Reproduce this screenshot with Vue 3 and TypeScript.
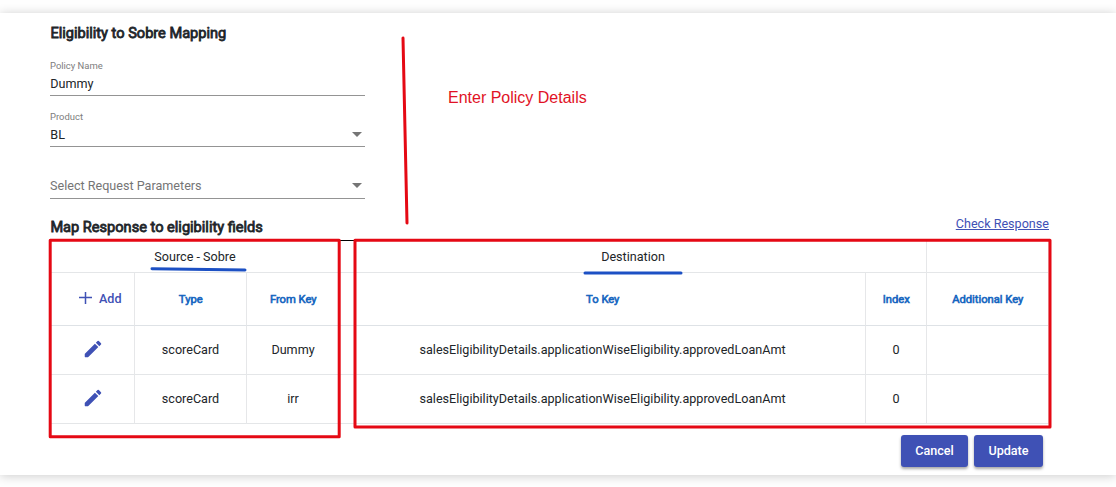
<script setup lang="ts">
interface MappingRow {
  type: string
  fromKey: string
  toKey: string
  index: number
  additionalKey: string
}

const rows: MappingRow[] = [
  { type: 'scoreCard', fromKey: 'Dummy', toKey: 'salesEligibilityDetails.applicationWiseEligibility.approvedLoanAmt', index: 0, additionalKey: '' },
  { type: 'scoreCard', fromKey: 'irr', toKey: 'salesEligibilityDetails.applicationWiseEligibility.approvedLoanAmt', index: 0, additionalKey: '' },
]
</script>

<template>
  <main class="page">
    <section class="card">
      <h2 class="title">Eligibility to Sobre Mapping</h2>
      <div class="form">
        <div class="field name">
          <label>Policy Name</label>
          <div class="value">Dummy</div>
        </div>
        <div class="field product">
          <label>Product</label>
          <div class="value">BL<i class="arrow"></i></div>
        </div>
        <div class="field params">
          <div class="value placeholder">Select Request Parameters<i class="arrow"></i></div>
        </div>
      </div>
      <div class="subhead">
        <h2 class="title">Map Response to eligibility fields</h2>
        <a class="link">Check Response</a>
      </div>
      <table class="grid">
        <colgroup>
          <col class="c-edit" /><col class="c-type" /><col class="c-from" /><col class="c-to" /><col class="c-index" /><col class="c-extra" />
        </colgroup>
        <thead>
          <tr class="groups">
            <td colspan="3">Source - Sobre</td>
            <td colspan="2">Destination</td>
            <td></td>
          </tr>
          <tr class="heads">
            <th class="add-cell">
              <button class="add" type="button">
                <svg width="14" height="14" viewBox="0 0 14 14"><path d="M7.5 1v12M1 6.5h13" /></svg>Add
              </button>
            </th>
            <th>Type</th>
            <th>From Key</th>
            <th>To Key</th>
            <th>Index</th>
            <th>Additional Key</th>
          </tr>
        </thead>
        <tbody>
          <tr v-for="(row, i) in rows" :key="i">
            <td class="edit-cell">
              <svg class="edit" width="22" height="22" viewBox="0 0 24 24"><path d="M3 17.46v3.04c0 .28.22.5.5.5h3.04c.13 0 .26-.05.35-.15L17.81 9.94l-3.75-3.75L3.15 17.1c-.1.1-.15.22-.15.36zM20.71 7.04a.996.996 0 0 0 0-1.41l-2.34-2.34a.996.996 0 0 0-1.41 0l-1.83 1.83 3.75 3.75 1.83-1.83z" /></svg>
            </td>
            <td>{{ row.type }}</td>
            <td>{{ row.fromKey }}</td>
            <td>{{ row.toKey }}</td>
            <td>{{ row.index }}</td>
            <td>{{ row.additionalKey }}</td>
          </tr>
        </tbody>
      </table>
      <div class="actions">
        <button class="btn cancel" type="button">Cancel</button>
        <button class="btn update" type="button">Update</button>
      </div>
    </section>
    <svg class="marks" width="1116" height="487" viewBox="0 0 1116 487">
      <g class="red">
        <rect x="50.2" y="240.3" width="289" height="196.5" />
        <rect x="355" y="240.3" width="695" height="186.7" />
        <path d="M403 38L407 223" />
      </g>
      <path class="blue" d="M152 268.8L245 270M585 273H681" />
      <text x="448" y="103">Enter Policy Details</text>
    </svg>
  </main>
</template>

<style>
body {
  margin: 0;
  background: #fff;
}
</style>

<style scoped>
.page {
  position: relative;
  box-sizing: border-box;
  width: 1116px;
  height: 487px;
  padding-top: 13px;
  overflow: hidden;
  background: #fefefe;
  font-family: Roboto, "Liberation Sans", sans-serif;
  font-size: 12.6px;
  color: #212529;
}
.card {
  box-sizing: border-box;
  height: 462px;
  padding: 10px 67px 0 50px;
  background: #fff;
  box-shadow: 0 1px 10px rgba(0, 0, 0, 0.2);
}
.title {
  margin: 0;
  padding-left: 0.4px;
  font-size: 14.58px;
  line-height: 20px;
  font-weight: 400;
  -webkit-text-stroke: 0.8px currentColor;
}
.form {
  width: 315px;
  height: 174px;
}
.field {
  display: flex;
  flex-direction: column;
  box-sizing: border-box;
  border-bottom: 1px solid #949494;
}
.name {
  height: 53px;
  padding-top: 16px;
}
.product {
  height: 51px;
  padding-top: 14px;
}
.params {
  height: 52px;
  padding-top: 28px;
}
.field label {
  font-size: 9.45px;
  line-height: 14px;
  color: #7d7d7d;
}
.value {
  display: flex;
  justify-content: space-between;
  align-items: center;
  height: 21px;
  padding-left: 0.3px;
  line-height: 21px;
}
.placeholder {
  padding-left: 0;
  color: #757575;
}
.arrow {
  margin-right: 3.5px;
  border: 5px solid transparent;
  border-top-color: #757575;
  border-bottom: 0;
}
.subhead {
  display: flex;
  justify-content: space-between;
  height: 23px;
}
.link {
  height: 20px;
  margin-top: -3px;
  line-height: 20px;
  color: #3f51b5;
  text-decoration: underline;
}
.grid {
  width: 999px;
  table-layout: fixed;
  border-spacing: 0;
  border-top: 1px solid #000;
  text-align: center;
}
.c-edit { width: 85px; }
.c-type { width: 112px; }
.c-from { width: 93px; }
.c-to { width: 526px; }
.c-index { width: 61px; }
.c-extra { width: 122px; }
.grid td,
.grid th {
  box-sizing: border-box;
  height: 49px;
  padding: 0;
  border-right: 1px solid #e6e7e9;
  border-bottom: 1px solid #e4e6e8;
}
.grid tbody td {
  padding-bottom: 2px;
}
.grid .edit-cell {
  padding-left: 1px;
}
.grid .groups td {
  height: 32px;
}
.grid .groups td:first-child {
  padding-left: 1px;
}
.grid .heads th {
  height: 53px;
  padding-left: 0.5px;
  font-size: 11.2px;
  font-weight: 400;
  -webkit-text-stroke: 0.6px currentColor;
  color: #1565c0;
  border-bottom-color: #dee2e6;
}
.grid .heads .add-cell {
  padding: 0 0 2px;
}
.grid .add {
  display: flex;
  align-items: center;
  gap: 7px;
  margin-left: 28px;
  padding: 0;
  border: 0;
  background: none;
  font: 500 12.6px Roboto, sans-serif;
  -webkit-text-stroke: 0;
  color: #3f51b5;
}
.add path {
  stroke: #3f51b5;
  stroke-width: 1.5;
}
.edit {
  display: block;
  margin: 0 auto;
  fill: #3f51b5;
}
.actions {
  display: flex;
  justify-content: flex-end;
  gap: 6px;
  margin: 11px 6px 0 0;
}
.btn {
  height: 32px;
  padding: 0 0 2px;
  border: 0;
  border-radius: 3px;
  background: #3f51b5;
  color: #fff;
  font: 500 12.6px Roboto, sans-serif;
  box-shadow: 0 2px 3px rgba(0, 0, 0, 0.35);
}
.cancel { width: 67px; }
.update { width: 69px; }
.marks {
  position: absolute;
  inset: 0;
  fill: none;
  stroke-linecap: round;
  stroke-linejoin: round;
}
.red {
  stroke: #e50914;
  stroke-width: 3;
}
.blue {
  stroke: #1c50c4;
  stroke-width: 3;
}
.marks text {
  font: 16px "Liberation Sans", Arial, sans-serif;
  fill: #e11225;
}
</style>
